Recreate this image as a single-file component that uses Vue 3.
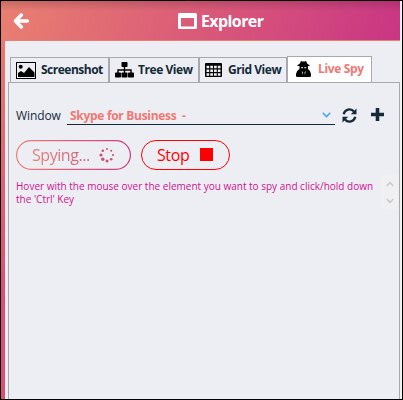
<script setup>
const dots = [
  [0, -6, 1], [4.2, -4.2, 1], [6, 0, 1.1], [4.2, 4.2, 1.3],
  [0, 6, 1.5], [-4.2, 4.2, 1.7], [-6, 0, 1.6], [-4.2, -4.2, 1.3],
]
</script>

<template>
  <div class="window">
    <header class="header">
      <svg class="back" viewBox="0 0 16 16"><path d="M8.300 2 2.500 8l5.800 6M3.500 8H14.300" fill="none" stroke="#fff" stroke-width="3.600" stroke-linecap="round" stroke-linejoin="round" /></svg>
      <div class="title">
        <svg width="19" height="17" viewBox="0 0 19 17"><path fill="#fff" fill-rule="evenodd" d="M1.500 0h16Q19 0 19 1.500v13Q19 16 17.500 16h-16Q0 16 0 14.500v-13Q0 0 1.500 0ZM3 5v8.500h13V5Z" /></svg>
        <h1>Explorer</h1>
      </div>
    </header>
    <main class="body">
      <nav class="tabs">
        <div class="tab t1">
          <svg width="20" height="17" viewBox="0 0 20 17"><rect x=".5" y=".5" width="19" height="16" fill="none" stroke="#000" /><circle cx="4.700" cy="4.800" r="2" /><path d="M2 15v-4l3-2 3 2 5-6 5.500 5.500V15Z" /></svg>
          <span>Screenshot</span>
        </div>
        <div class="tab t2">
          <svg width="19" height="16" viewBox="0 0 19 16"><rect x="6.500" y="0" width="6" height="5" rx=".8" /><path d="M9.500 5v6M3 11V8h13v3" fill="none" stroke="#000" stroke-width="1.400" /><rect y="10.500" width="6" height="5" rx=".8" /><rect x="6.500" y="10.500" width="6" height="5" rx=".8" /><rect x="13" y="10.500" width="6" height="5" rx=".8" /></svg>
          <span>Tree View</span>
        </div>
        <div class="tab t3">
          <svg width="17" height="14" viewBox="0 0 17 14"><rect width="17" height="14" rx="1" /><path d="M1.500 4h14M1.500 7.800h14M1.500 11.500h14" stroke="#edeef4" stroke-width="2.500" stroke-dasharray="2.700 1.070" /></svg>
          <span>Grid View</span>
        </div>
        <div class="tab t4">
          <svg width="15" height="17" viewBox="0 0 15 17"><path d="M5 0Q7.500 1 10 0L11.500 3 13.500 4v1H1.500V4l2-1ZM3.500 5h8.500v3Q14.500 9.500 15 13v2q0 1-1.500 1h-12Q0 16 0 15v-2Q.5 9.500 3.500 8Z" /><path d="M5 6.200h2v1H5.300ZM8.300 6.200h2l-.3 1H8.300ZM5.800 10l1.100 1.300L6.600 14ZM9.700 10l-1.100 1.300L8.900 14Z" fill="#fff" /></svg>
          <span>Live Spy</span>
        </div>
      </nav>
      <section class="panel">
        <div class="row">
          <label>Window</label>
          <div class="select">
            <span>Skype for Business&nbsp; -</span>
            <svg width="9" height="6" viewBox="0 0 9 6"><path d="m.7.8 3.800 3.800L8.300.8" fill="none" stroke="#42a5f5" stroke-width="1.500" /></svg>
          </div>
          <svg class="refresh" viewBox="0 0 15 15"><g fill="none" stroke="#142a38" stroke-width="2.300"><path d="M1.700 6.200A5.900 5.900 0 0 1 12 3.600M13.300 8.800A5.900 5.900 0 0 1 3 11.400" /></g><path d="M14.500.5v5.700H8.800ZM.5 14.500V8.800h5.700Z" fill="#142a38" /></svg>
          <svg class="plus" viewBox="0 0 13 13"><path d="M4.700 0h3.600v4.700H13v3.600H8.300V13H4.700V8.300H0V4.700h4.700Z" fill="#142a38" /></svg>
        </div>
        <div class="buttons">
          <div class="spying">
            <svg class="outline" width="115" height="30">
              <defs><linearGradient id="edge" x2="1"><stop stop-color="#ea7f72" /><stop offset="1" stop-color="#c93b83" /></linearGradient></defs>
              <rect x=".6" y=".6" width="113.800" height="28.800" rx="14.400" fill="none" stroke="url(#edge)" stroke-width="1.200" />
            </svg>
            <span>Spying...</span>
            <svg class="spinner" viewBox="-8 -8 16 16"><circle v-for="(d, i) in dots" :key="i" :cx="d[0]" :cy="d[1]" :r="d[2]" fill="#cf5073" /></svg>
          </div>
          <div class="stop"><span>Stop</span><i></i></div>
        </div>
        <div class="hint">
          <p>Hover with the mouse over the element you want to spy and click/hold down<br>the 'Ctrl' Key</p>
          <div class="scroll">
            <svg width="8" height="6" viewBox="0 0 8 6"><path d="M.8 5 4 1.500 7.200 5" /></svg>
            <svg width="8" height="6" viewBox="0 0 8 6"><path d="M.8 1 4 4.500 7.200 1" /></svg>
          </div>
        </div>
      </section>
    </main>
  </div>
</template>

<style>
body { margin: 0; overflow: hidden; }
</style>

<style scoped>
* { box-sizing: border-box; }
svg { display: block; flex: none; }
span, label, p, h1 { white-space: nowrap; }
.window { width: 403px; height: 400px; border: 1px solid #000; background: linear-gradient(90deg, transparent 399px, #f1f1f1 399px), linear-gradient(110deg, #e98070 0, #dc6076 42%, #c93584 100%) 0 0 / 399px 40px no-repeat, linear-gradient(#e98070, #d84f77 75%); font-family: "Open Sans", "Noto Sans", sans-serif; color: #142a38; display: flex; flex-direction: column; }
.header { height: 40px; width: 399px; flex: none; display: flex; align-items: flex-start; background: linear-gradient(rgba(60, 20, 40, .2), transparent 10px); border-bottom: 1px solid #e57f70; }
.back { width: 16px; height: 16px; margin: 12px 0 0 12px; }
.title { display: flex; margin: 12px 0 0 149px; gap: 4px; }
h1 { margin: -2px 0 0; font-size: 16px; line-height: 20px; font-weight: 700; color: #fff; letter-spacing: -.6px; }
.body { flex: 1; width: 395px; margin-left: 4px; background: #edeef4; padding: 15px 0 0 3px; display: flex; flex-direction: column; }
.tabs { display: flex; align-items: flex-end; height: 26px; padding-left: 2px; }
.tab { height: 25px; border: 1px solid #a9a9ad; border-bottom: 0; display: flex; align-items: center; font-size: 12px; font-weight: 700; line-height: 16px; letter-spacing: -.45px; }
.t1 { width: 99px; padding-left: 5px; gap: 5px; letter-spacing: -.5px; }
.t2 { width: 90px; padding-left: 5px; gap: 4px; }
.t3 { width: 88px; padding-left: 5px; gap: 6px; }
.t4 { width: 85px; height: 26px; padding-left: 8px; gap: 7px; background: #fff; color: #f27872; letter-spacing: -.35px; }
.t4 span { margin-top: -1px; }
.panel { flex: 1; width: 392px; border: 1px solid #a9a9ad; border-bottom: 0; padding: 20px 0 0 7px; }
.row { display: flex; height: 22px; }
label { width: 51px; font-size: 12px; line-height: 26px; letter-spacing: -.1px; }
.select { width: 268px; border-bottom: 1px solid #142a38; display: flex; justify-content: space-between; align-items: center; padding: 3px 4px 0 3px; font-size: 12px; font-weight: 700; color: #f27872; letter-spacing: -.3px; }
.refresh { width: 15px; height: 15px; margin: 5px 0 0 7px; }
.plus { width: 13px; height: 13px; margin: 5px 0 0 14px; }
.buttons { display: flex; gap: 10px; margin-top: 15px; }
.spying { position: relative; width: 115px; height: 30px; display: flex; align-items: center; padding-left: 16px; }
.outline { position: absolute; inset: 0; }
.spying span { width: 67px; font-size: 16px; letter-spacing: -.45px; line-height: 30px; background: linear-gradient(90deg, #e18076, #cd5a7e); background-clip: text; color: transparent; }
.spinner { width: 16px; height: 16px; }
.stop { width: 89px; height: 30px; border: 1px solid red; border-radius: 15px; display: flex; align-items: center; padding-left: 15px; color: red; font-size: 16px; letter-spacing: -.4px; line-height: 28px; }
.stop span { width: 43px; }
.stop i { width: 13px; height: 13px; margin-top: -1px; background: red; }
.hint { display: flex; margin-top: 5px; }
p { width: 364px; margin: 5px 0 0; font-size: 10px; line-height: 13px; color: #cf1290; }
.scroll { width: 17px; height: 34px; background: #f0f0f0; display: flex; flex-direction: column; align-items: center; justify-content: space-between; padding: 6px 0 5px; margin-left: 1px; }
.scroll path { fill: none; stroke: #c4c4c4; stroke-width: 1.2; }
</style>
